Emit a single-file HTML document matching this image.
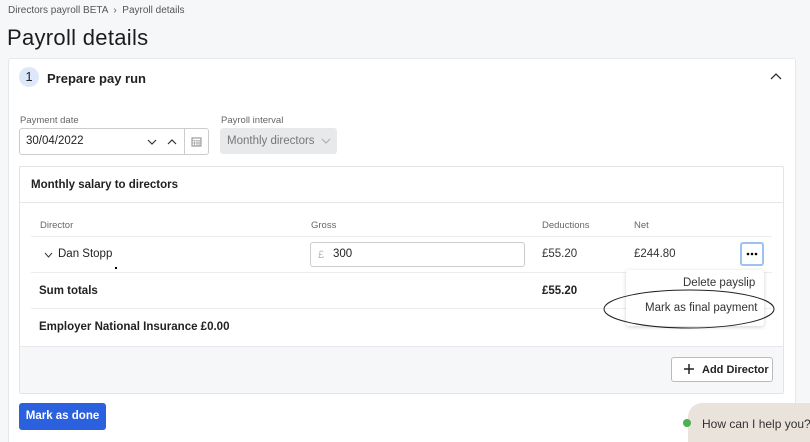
<!DOCTYPE html>
<html><head><style>
*{box-sizing:border-box;margin:0;padding:0}
html,body{width:810px;height:442px;overflow:hidden}
body{background:#f6f7f9;font-family:"Liberation Sans",sans-serif;color:#222;position:relative}
.a{position:absolute;white-space:nowrap}
.t{font-size:9.5px;color:#666}
</style></head><body>
<div class="a" style="left:8px;top:5px;font-size:10px;color:#555">Directors payroll BETA &nbsp;›&nbsp; Payroll details</div>
<div class="a" style="left:7px;top:25px;font-size:22px;color:#1c1c1c;letter-spacing:.3px">Payroll details</div>
<div class="a" style="left:8px;top:58px;width:788px;height:400px;background:#fff;border:1px solid #e6e7ea;border-radius:3px"></div>
<div class="a" style="left:19px;top:67px;width:20px;height:20px;border-radius:50%;background:#dce8fa;font-size:13px;text-align:center;line-height:20px">1</div>
<div class="a" style="left:47px;top:71px;font-size:13px;font-weight:bold">Prepare pay run</div>
<svg class="a" style="left:770px;top:72px" width="12" height="8"><path d="M1 7L6 2L11 7" stroke="#333" stroke-width="1.3" fill="none"/></svg>
<div class="a t" style="left:20px;top:115px">Payment date</div>
<div class="a" style="left:19px;top:128px;width:190px;height:27px;border:1px solid #ccc;border-radius:3px"></div>
<div class="a" style="left:184px;top:129px;width:1px;height:25px;background:#ccc"></div>
<div class="a" style="left:26px;top:135px;font-size:11.5px">30/04/2022</div>
<svg class="a" style="left:147px;top:138px" width="40" height="8"><path d="M1 2L5 6L9 2M21 6L25 2L29 6" stroke="#333" stroke-width="1.2" fill="none"/></svg>
<svg class="a" style="left:191px;top:136px" width="11" height="11"><rect x="1" y="2" width="9" height="8" fill="none" stroke="#888"/><path d="M1 4.5H10M3.5 5V10M6 5V10M8 5V10M1 7H10" stroke="#888" stroke-width=".6"/></svg>
<div class="a t" style="left:221px;top:115px">Payroll interval</div>
<div class="a" style="left:220px;top:128px;width:117px;height:26px;background:#e8e9eb;border-radius:3px;font-size:11.5px;color:#777;padding:7px 0 0 7px">Monthly directors</div>
<svg class="a" style="left:321px;top:138px" width="10" height="6"><path d="M1 1L5 5L9 1" stroke="#aaa" fill="none"/></svg>
<div class="a" style="left:19px;top:166px;width:765px;height:228px;border:1px solid #e3e4e7;border-radius:2px"></div>
<div class="a" style="left:19px;top:202px;width:765px;height:1px;background:#e6e7ea"></div>
<div class="a" style="left:31px;top:179px;font-size:11.5px;font-weight:bold">Monthly salary to directors</div>
<div class="a t" style="left:40px;top:220px">Director</div>
<div class="a t" style="left:311px;top:220px">Gross</div>
<div class="a t" style="left:542px;top:220px">Deductions</div>
<div class="a t" style="left:634px;top:220px">Net</div>
<div class="a" style="left:31px;top:236px;width:741px;height:1px;background:#ececef"></div>
<svg class="a" style="left:44px;top:252px" width="9" height="6"><path d="M1 1L4.5 5L8 1" stroke="#333" fill="none"/></svg>
<div class="a" style="left:58px;top:248px;font-size:11.5px">Dan Stopp</div>
<div class="a" style="left:115px;top:267px;width:2px;height:2px;background:#000"></div>
<div class="a" style="left:310px;top:242px;width:215px;height:25px;border:1px solid #ccc;border-radius:3px"></div>
<div class="a" style="left:318px;top:249px;font-size:11px;color:#bbb">£</div>
<div class="a" style="left:333px;top:248px;font-size:11.5px">300</div>
<div class="a" style="left:542px;top:248px;font-size:11.5px;color:#333">£55.20</div>
<div class="a" style="left:634px;top:248px;font-size:11.5px;color:#333">£244.80</div>
<div class="a" style="left:740px;top:242px;width:24px;height:24px;border:2px solid #9cc2f2;border-radius:3px"></div>
<svg class="a" style="left:746px;top:252px" width="12" height="4"><circle cx="2" cy="2" r="1.3"/><circle cx="6" cy="2" r="1.3"/><circle cx="10" cy="2" r="1.3"/></svg>
<div class="a" style="left:31px;top:272px;width:741px;height:1px;background:#ececef"></div>
<div class="a" style="left:39px;top:285px;font-size:11.5px;font-weight:bold">Sum totals</div>
<div class="a" style="left:542px;top:285px;font-size:11.5px;font-weight:bold">£55.20</div>
<div class="a" style="left:31px;top:308px;width:741px;height:1px;background:#ececef"></div>
<div class="a" style="left:39px;top:321px;font-size:11.5px;font-weight:bold">Employer National Insurance £0.00</div>
<div class="a" style="left:20px;top:346px;width:763px;height:47px;background:#f6f7f9;border-top:1px solid #e6e7ea"></div>
<div class="a" style="left:626px;top:270px;width:138px;height:56px;background:#fff;border-radius:3px;box-shadow:0 1px 4px rgba(0,0,0,.18)"></div>
<div class="a" style="left:683px;top:277px;font-size:11.5px;color:#333">Delete payslip</div>
<div class="a" style="left:645px;top:302px;font-size:11.5px;color:#333">Mark as final payment</div>
<svg class="a" style="left:602px;top:288px" width="175" height="42"><ellipse cx="87" cy="21" rx="85" ry="19" fill="none" stroke="#222" stroke-width="1"/></svg>
<div class="a" style="left:671px;top:357px;width:102px;height:25px;background:#fff;border:1px solid #bbb;border-radius:3px;font-size:11px;font-weight:bold;padding:6px 0 0 30px">Add Director</div>
<svg class="a" style="left:684px;top:364px" width="10" height="10"><path d="M5 0V10M0 5H10" stroke="#222" stroke-width="1.5"/></svg>
<div class="a" style="left:19px;top:403px;width:87px;height:27px;background:#2b60de;border-radius:3px;color:#fff;font-size:11.5px;font-weight:bold;text-align:center;line-height:27px">Mark as done</div>
<div class="a" style="left:688px;top:403px;width:130px;height:45px;background:#e9e3dc;border-radius:14px 0 0 0"></div>
<div class="a" style="left:683px;top:419px;width:8px;height:8px;border-radius:50%;background:#4caf50"></div>
<div class="a" style="left:702px;top:417px;font-size:12px;color:#333">How can I help you?</div>
</body></html>
